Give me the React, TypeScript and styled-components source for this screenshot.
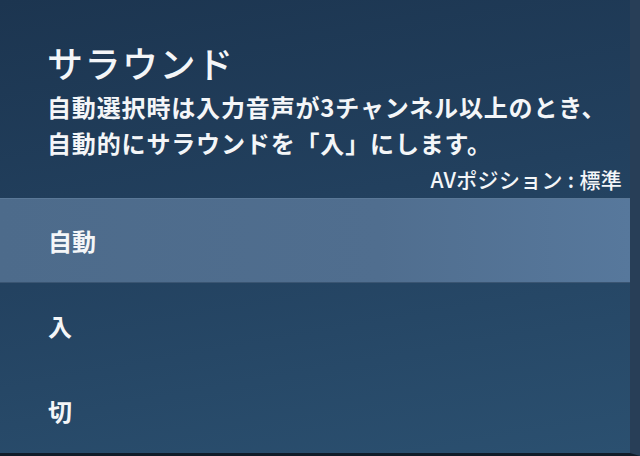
import React from 'react';
import styled, { createGlobalStyle, css } from 'styled-components';

const Global = createGlobalStyle`
  html, body {
    margin: 0;
    padding: 0;
    background: #14263a;
  }
  body {
    font-family: 'Noto Sans CJK JP', 'Noto Sans', sans-serif;
    color: #f4f6f8;
  }
`;

const Screen = styled.div`
  width: 640px;
  height: 456px;
  box-sizing: border-box;
  display: flex;
  flex-flow: column;
  overflow: hidden;
  background: linear-gradient(170deg, #1c3550 0%, #22405e 45%, #2b5070 100%);
  border-right: 10px solid #283e57;
  border-bottom: 3px solid #101c29;
`;

const Header = styled.div`
  display: flex;
  flex-flow: column;
  padding: 41px 8px 0 47px;
  height: 200px;
  box-sizing: border-box;
`;

const Title = styled.h1`
  margin: 0;
  font-size: 36px;
  font-weight: 500;
  line-height: 42px;
  letter-spacing: 1.5px;
`;

const Desc = styled.p`
  margin: 6px 0 0;
  font-size: 24px;
  font-weight: 700;
  line-height: 36px;
  letter-spacing: 0.85px;
`;

const Position = styled.div`
  align-self: flex-end;
  font-size: 21px;
  font-weight: 500;
  line-height: 26px;
  margin-top: 5px;
  letter-spacing: 0.3px;
`;

const Menu = styled.ul`
  list-style: none;
  margin: 0;
  padding: 0;
  flex: 1;
  display: flex;
  flex-flow: column;
`;

const Item = styled.li<{ $selected?: boolean }>`
  height: 85px;
  display: flex;
  align-items: center;
  padding-left: 48px;
  font-size: 24px;
  font-weight: 700;
  ${({ $selected }) =>
    $selected &&
    css`
      background: linear-gradient(90deg, #4d6b8b 0%, #506e8f 60%, #57789c 100%);
      border-top: 1px solid #5a7897;
      border-bottom: 1px solid #3a5572;
      box-sizing: border-box;
    `};
`;

const items = ['自動', '入', '切'];

export default function App() {
  return (
    <>
      <Global />
      <Screen>
        <Header>
          <Title>サラウンド</Title>
          <Desc>
            自動選択時は入力音声が3チャンネル以上のとき、
            <br />
            自動的にサラウンドを「入」にします。
          </Desc>
          <Position>AVポジション : 標準</Position>
        </Header>
        <Menu>
          {items.map((label, i) => (
            <Item key={label} $selected={i === 0}>
              {label}
            </Item>
          ))}
        </Menu>
      </Screen>
    </>
  );
}
